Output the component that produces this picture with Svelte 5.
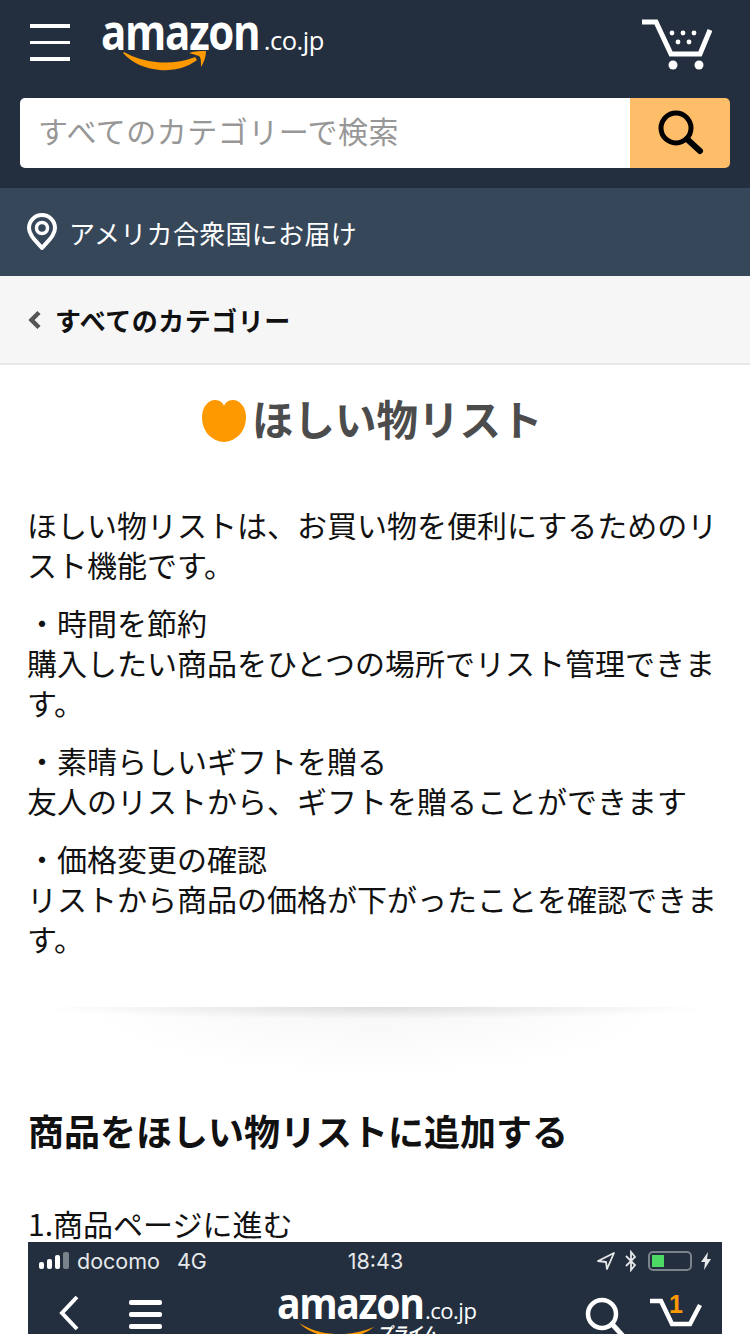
<script>
  const sections = [
    { title: '', lines: ['ほしい物リストは、お買い物を便利にするためのリスト機能です。'] },
    { title: '・時間を節約', lines: ['購入したい商品をひとつの場所でリスト管理できます。'] },
    { title: '・素晴らしいギフトを贈る', lines: ['友人のリストから、ギフトを贈ることができます'] },
    { title: '・価格変更の確認', lines: ['リストから商品の価格が下がったことを確認できます。'] }
  ];
</script>

<div class="page">
  <header class="top">
    <div class="nav-row">
      <button class="burger" aria-label="menu"><span></span><span></span><span></span></button>
      <div class="logo">
        <span class="word">amazon</span><span class="tld">.co.jp</span>
        <svg class="smile" viewBox="0 0 84 22" width="84" height="22">
          <path d="M1 3 C 20 14, 48 17, 72 8 L 73 10 C 54 24, 20 23, 1 3 Z" fill="#f90" stroke="#f90" stroke-width="1.5" stroke-linejoin="round" />
          <path d="M66 3 C 72 1, 78 1, 83 1 C 83 7, 81 12, 78 17 C 78 11, 78 8, 76 6 C 73 5, 70 4, 66 3 Z" fill="#f90" />
        </svg>
      </div>
      <svg class="cart" viewBox="0 0 72 52" width="72" height="52">
        <path d="M2 3 H 16 L 31 35 H 60 L 70 11" fill="none" stroke="#fff" stroke-width="5" />
        <g fill="#fff">
          <circle cx="32" cy="14" r="2.4" /><circle cx="43" cy="14" r="2.4" /><circle cx="54" cy="14" r="2.4" />
          <circle cx="38" cy="23" r="2.4" /><circle cx="49" cy="23" r="2.4" />
          <circle cx="33" cy="46" r="4.5" /><circle cx="59" cy="46" r="4.5" />
        </g>
      </svg>
    </div>
    <div class="search">
      <div class="search-input">すべてのカテゴリーで検索</div>
      <div class="search-btn">
        <svg viewBox="0 0 48 48" width="48" height="48">
          <circle cx="20" cy="19" r="15" fill="none" stroke="#000" stroke-width="5" />
          <path d="M31 30 L 44 42" stroke="#000" stroke-width="6" stroke-linecap="round" />
        </svg>
      </div>
    </div>
  </header>

  <div class="deliver">
    <svg viewBox="0 0 32 38" width="32" height="38">
      <path d="M16 35 C 9 27, 3 22, 3 15 A 13 13 0 0 1 29 15 C 29 22, 23 27, 16 35 Z" fill="none" stroke="#fff" stroke-width="4" stroke-linejoin="round" />
      <circle cx="16" cy="15" r="5.5" fill="none" stroke="#fff" stroke-width="3.5" />
    </svg>
    <span>アメリカ合衆国にお届け</span>
  </div>

  <div class="crumb">
    <svg viewBox="0 0 14 20" width="14" height="20">
      <path d="M11 2.5 L 3.5 10 L 11 17.5" fill="none" stroke="#555" stroke-width="4.5" />
    </svg>
    <span>すべてのカテゴリー</span>
  </div>

  <main class="content">
    <div class="wish-head">
      <svg viewBox="0 0 46 44" width="46" height="44">
        <path d="M23 43 C 10 42, 1 32, 1 18 C 1 7, 8 1, 14 1 C 19 1, 22 4, 23 7 C 24 4, 27 1, 32 1 C 38 1, 45 7, 45 18 C 45 32, 36 42, 23 43 Z" fill="#f90" />
      </svg>
      <span>ほしい物リスト</span>
    </div>

    {#each sections as s}
      <p>
        {#if s.title}{s.title}<br />{/if}
        {#each s.lines as line}{line}{/each}
      </p>
    {/each}

    <div class="divider"></div>

    <h2>商品をほしい物リストに追加する</h2>
    <div class="step">1.商品ページに進む</div>

    <div class="shot">
      <div class="status">
        <div class="status-left">
          <svg viewBox="0 0 32 20" width="32" height="20">
            <g fill="#fff">
              <rect x="0" y="11" width="5" height="7" rx="2" />
              <rect x="8" y="8" width="5" height="10" rx="2" />
              <rect x="16" y="4" width="5" height="14" rx="2" />
            </g>
            <rect x="24" y="1" width="6" height="17" rx="2" fill="#7a828c" />
          </svg>
          <span>docomo</span>
          <span class="net">4G</span>
        </div>
        <span class="clock">18:43</span>
        <div class="status-right">
          <svg viewBox="0 0 20 20" width="20" height="20">
            <path d="M18 2 L 2 10 L 10 11 L 11 18 Z" fill="none" stroke="#e6e8ea" stroke-width="1.8" stroke-linejoin="round" />
          </svg>
          <svg viewBox="0 0 14 22" width="14" height="22">
            <path d="M2 6 L 11 15 L 7 20 V 2 L 11 7 L 2 16" fill="none" stroke="#e6e8ea" stroke-width="1.8" />
          </svg>
          <div class="battery"><div class="charge"></div></div>
          <svg viewBox="0 0 12 20" width="12" height="20">
            <path d="M8 1 L 1 11 H 5 L 4 19 L 11 8 H 7 Z" fill="#e6e8ea" />
          </svg>
        </div>
      </div>
      <div class="shot-nav">
        <svg class="back" viewBox="0 0 24 36" width="24" height="36">
          <path d="M20 2 L 5 18 L 20 34" fill="none" stroke="#fff" stroke-width="4" />
        </svg>
        <div class="shot-burger"><span></span><span></span><span></span></div>
        <div class="shot-logo">
          <span class="word">amazon</span><span class="tld">.co.jp</span>
          <span class="prime">プライム</span>
          <svg class="shot-smile" viewBox="0 0 84 22" width="84" height="22">
            <path d="M1 4 C 22 17, 50 19, 76 8 C 56 24, 20 22, 1 4 Z" fill="#f90" />
          </svg>
        </div>
        <svg class="shot-search" viewBox="0 0 42 42" width="42" height="42">
          <circle cx="18" cy="18" r="14" fill="none" stroke="#fff" stroke-width="4.5" />
          <path d="M28 28 L 39 40" stroke="#fff" stroke-width="5" stroke-linecap="round" />
        </svg>
        <div class="shot-cart">
          <svg viewBox="0 0 56 48" width="56" height="48">
            <path d="M2 3 H 13 L 24 26 H 42 L 52 7" fill="none" stroke="#fff" stroke-width="4.5" />
          </svg>
          <span>1</span>
        </div>
      </div>
    </div>
  </main>
</div>

<style>
  :global(body) {
    margin: 0;
    background: #fff;
  }

  .page {
    width: 750px;
    height: 1334px;
    overflow: hidden;
    font-family: "Noto Sans CJK JP", "Noto Sans", sans-serif;
    color: #111;
  }

  .top {
    height: 188px;
    box-sizing: border-box;
    background: #232f3e;
    padding: 0 20px;
  }

  .nav-row {
    height: 98px;
    display: flex;
    align-items: flex-start;
  }

  .burger {
    width: 40px;
    margin: 24px 0 0 10px;
    padding: 0;
    border: 0;
    background: none;
    display: flex;
    flex-direction: column;
    gap: 13px;
  }

  .burger span {
    height: 3.5px;
    background: #fff;
  }

  .logo {
    position: relative;
    margin: 2px 0 0 31px;
    display: flex;
    align-items: baseline;
    color: #fff;
  }

  .word {
    font-family: "Open Sans", sans-serif;
    font-weight: 700;
    font-size: 48px;
    line-height: 60px;
    letter-spacing: -1.5px;
    transform: scaleX(0.876);
    transform-origin: left center;
    margin-right: -22px;
  }

  .tld {
    font-family: "Open Sans", sans-serif;
    font-size: 25.5px;
    letter-spacing: -0.5px;
    margin-left: 4px;
  }

  .smile {
    position: absolute;
    left: 22px;
    top: 48px;
  }

  .cart {
    margin: 19px 18px 0 auto;
  }

  .search {
    display: flex;
    height: 70px;
    border-radius: 5px;
    overflow: hidden;
  }

  .search-input {
    flex: 1;
    background: #fff;
    color: #979797;
    font-size: 30px;
    line-height: 65px;
    letter-spacing: 0.5px;
    padding-left: 18px;
  }

  .search-btn {
    width: 100px;
    background: #febd69;
    display: flex;
    align-items: center;
    justify-content: center;
  }

  .deliver {
    height: 88px;
    background: #37475a;
    color: #fff;
    display: flex;
    align-items: center;
    gap: 11px;
    padding-left: 26px;
    font-size: 26px;
    letter-spacing: 0.3px;
  }

  .crumb {
    height: 89px;
    box-sizing: border-box;
    background: #f6f6f6;
    border-bottom: 2px solid #e7e7e7;
    display: flex;
    align-items: center;
    gap: 13px;
    padding-left: 28px;
    font-size: 26px;
    font-weight: 700;
    letter-spacing: 0.5px;
  }

  .content {
    padding: 0 28px;
  }

  .wish-head {
    height: 112px;
    display: flex;
    align-items: center;
    gap: 5px;
    padding-left: 173px;
    color: #4c4c4c;
    font-size: 41.5px;
    font-weight: 700;
  }

  .wish-head span {
    margin-top: -6px;
  }

  p {
    margin: 0 0 18px -1px;
    font-size: 30px;
    line-height: 40px;
  }

  p:first-of-type {
    margin-top: 27px;
  }

  .divider {
    height: 70px;
    margin: 49px 0 0;
    background:
      radial-gradient(ellipse 50% 12px at 50% 0, rgba(0, 0, 0, 0.1), transparent),
      radial-gradient(ellipse 42% 68px at 50% 0, rgba(0, 0, 0, 0.035), transparent);
  }

  h2 {
    margin: 28px 0 0;
    font-size: 36px;
    line-height: 50px;
    font-weight: 700;
  }

  .step {
    margin-top: 48px;
    font-size: 30px;
    line-height: 40px;
    height: 39px;
  }

  .shot {
    width: 694px;
    height: 92px;
    overflow: hidden;
    background: #232f3e;
    color: #e6e8ea;
  }

  .status {
    height: 38px;
    display: grid;
    grid-template-columns: 1fr auto 1fr;
    align-items: center;
    padding: 0 10px 0 11px;
    font-family: Inter, sans-serif;
    font-size: 21.5px;
  }

  .status-left {
    display: flex;
    align-items: center;
    gap: 6px;
  }

  .net {
    margin-left: 11px;
  }

  .status-right {
    display: flex;
    align-items: center;
    justify-content: flex-end;
    gap: 8px;
  }

  .battery {
    width: 44px;
    height: 20px;
    margin-left: 2px;
    border: 2px solid #7a828c;
    border-radius: 5px;
    padding: 2px;
    box-sizing: border-box;
  }

  .charge {
    width: 12px;
    height: 100%;
    background: #4cd964;
  }

  .shot-nav {
    position: relative;
    height: 54px;
    display: flex;
    align-items: flex-start;
    color: #fff;
  }

  .back {
    margin: 15px 0 0 29px;
  }

  .shot-burger {
    width: 33px;
    margin: 20px 0 0 48px;
    display: flex;
    flex-direction: column;
    gap: 7px;
  }

  .shot-burger span {
    height: 5px;
    border-radius: 2px;
    background: #fff;
  }

  .shot-logo {
    position: absolute;
    left: 249px;
    top: 5px;
    display: flex;
    align-items: baseline;
  }

  .shot-logo .word {
    font-size: 43px;
    line-height: 36px;
    transform: scaleX(0.91);
    margin-right: -14px;
  }

  .shot-logo .tld {
    font-size: 22px;
    line-height: 18px;
    margin-left: 1px;
  }

  .prime {
    position: absolute;
    left: 100px;
    top: 39px;
    font-size: 15px;
    line-height: 15px;
    font-weight: 700;
    font-style: italic;
    font-family: "Noto Sans CJK JP", sans-serif;
  }

  .shot-smile {
    position: absolute;
    left: 21px;
    top: 34px;
  }

  .shot-search {
    position: absolute;
    left: 556px;
    top: 16px;
  }

  .shot-cart {
    position: absolute;
    left: 620px;
    top: 18px;
  }

  .shot-cart span {
    position: absolute;
    left: 21px;
    top: -8px;
    color: #f90;
    font-family: "Liberation Sans", sans-serif;
    font-weight: 700;
    font-size: 25px;
  }
</style>
